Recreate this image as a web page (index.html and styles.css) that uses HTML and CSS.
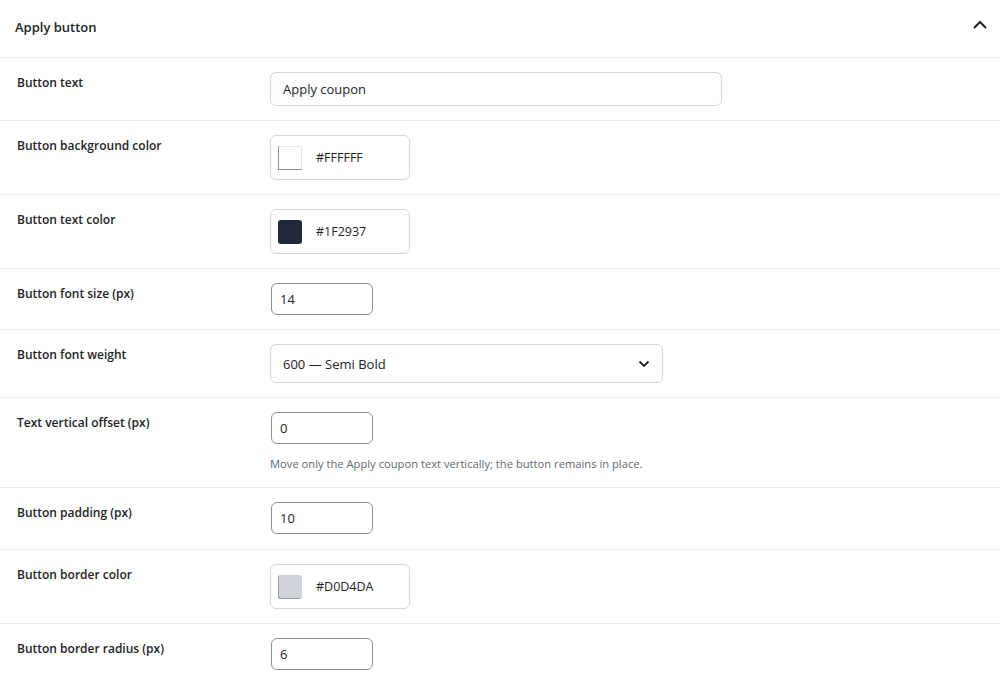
FILE: index.html
```html
<!DOCTYPE html>
<html>
<head>
<meta charset="utf-8">
<link rel="stylesheet" href="styles.css">
</head>
<body>
<div class="panel">
  <div class="panel-head">
    <h2 class="panel-title">Apply button</h2>
    <svg class="chev-up" width="16" height="10" viewBox="0 0 16 10"><path d="M2 8 L8 2 L14 8" fill="none" stroke="#1d2327" stroke-width="2"/></svg>
  </div>
  <div class="row">
    <div class="label">Button text</div>
    <div class="field"><div class="input text-input">Apply coupon</div></div>
  </div>
  <div class="row">
    <div class="label">Button background color</div>
    <div class="field"><div class="color-box"><span class="swatch swatch-white"></span><span class="hex">#FFFFFF</span></div></div>
  </div>
  <div class="row">
    <div class="label">Button text color</div>
    <div class="field"><div class="color-box"><span class="swatch swatch-dark"></span><span class="hex">#1F2937</span></div></div>
  </div>
  <div class="row">
    <div class="label">Button font size (px)</div>
    <div class="field"><div class="input num-input">14</div></div>
  </div>
  <div class="row">
    <div class="label">Button font weight</div>
    <div class="field"><div class="input select">600 — Semi Bold<svg class="chev-down" width="12" height="8" viewBox="0 0 12 8"><path d="M1.5 1.5 L6 6 L10.5 1.5" fill="none" stroke="#1d2327" stroke-width="1.8"/></svg></div></div>
  </div>
  <div class="row">
    <div class="label">Text vertical offset (px)</div>
    <div class="field">
      <div class="input num-input">0</div>
      <p class="desc">Move only the Apply coupon text vertically; the button remains in place.</p>
    </div>
  </div>
  <div class="row row-tall">
    <div class="label">Button padding (px)</div>
    <div class="field"><div class="input num-input">10</div></div>
  </div>
  <div class="row">
    <div class="label">Button border color</div>
    <div class="field"><div class="color-box"><span class="swatch swatch-gray"></span><span class="hex">#D0D4DA</span></div></div>
  </div>
  <div class="row">
    <div class="label">Button border radius (px)</div>
    <div class="field"><div class="input num-input">6</div></div>
  </div>
</div>
</body>
</html>
```
FILE: styles.css
```css
* { box-sizing: border-box; }
body {
  margin: 0;
  background: #fff;
  font-family: "Open Sans", "Noto Sans", sans-serif;
  color: #1d2327;
}
.panel { width: 1000px; }
.panel-head {
  height: 58px;
  display: flex;
  align-items: center;
  justify-content: space-between;
  padding: 0 12px 0 15px;
  border-bottom: 1px solid #ececee;
}
.panel-title {
  margin: 0;
  font-size: 13px;
  font-weight: 600;
  margin-top: -4px;
}
.chev-up { margin-top: -8px; }
.row {
  display: flex;
  padding: 14px 0 14px 17px;
  border-bottom: 1px solid #ececee;
}
.row-tall { padding-bottom: 15px; }
.label {
  width: 253px;
  flex: none;
  font-size: 12px;
  font-weight: 600;
  line-height: 16px;
  padding-top: 3px;
}
.field { flex: 1; }
.input {
  background: #fff;
  font-size: 13px;
  display: flex;
  align-items: center;
  padding: 0 12px;
  border-radius: 6px;
}
.text-input {
  width: 452px;
  height: 34px;
  border: 1px solid #d5d6d8;
}
.num-input {
  width: 102px;
  height: 32px;
  border: 1px solid #8c8f94;
  padding: 0 8px;
  margin-left: 1px;
}
.select {
  width: 393px;
  height: 39px;
  border: 1px solid #d5d6d8;
  justify-content: space-between;
  padding: 0 12px 0 12px;
}
.color-box {
  width: 140px;
  height: 45px;
  border: 1px solid #d5d6d8;
  border-radius: 6px;
  display: flex;
  align-items: center;
  padding-left: 7px;
}
.swatch {
  width: 24px;
  height: 24px;
  flex: none;
  margin-right: 14px;
}
.swatch-white {
  background: #fff;
  border-left: 1px solid #8c8f94;
  border-bottom: 1px solid #8c8f94;
  border-top: 1px solid #e6e6e6;
  border-right: 1px solid #e6e6e6;
}
.swatch-dark {
  background: #1f2937;
  border-radius: 3px;
}
.swatch-gray {
  background: #d0d4da;
  border-radius: 3px;
  box-shadow: inset 1px -1px 0 #9a9da2;
}
.hex { font-size: 12.5px; color: #1d2327; }
.desc {
  margin: 10px 0 0;
  font-size: 11.2px;
  line-height: 19px;
  color: #646970;
}
```
